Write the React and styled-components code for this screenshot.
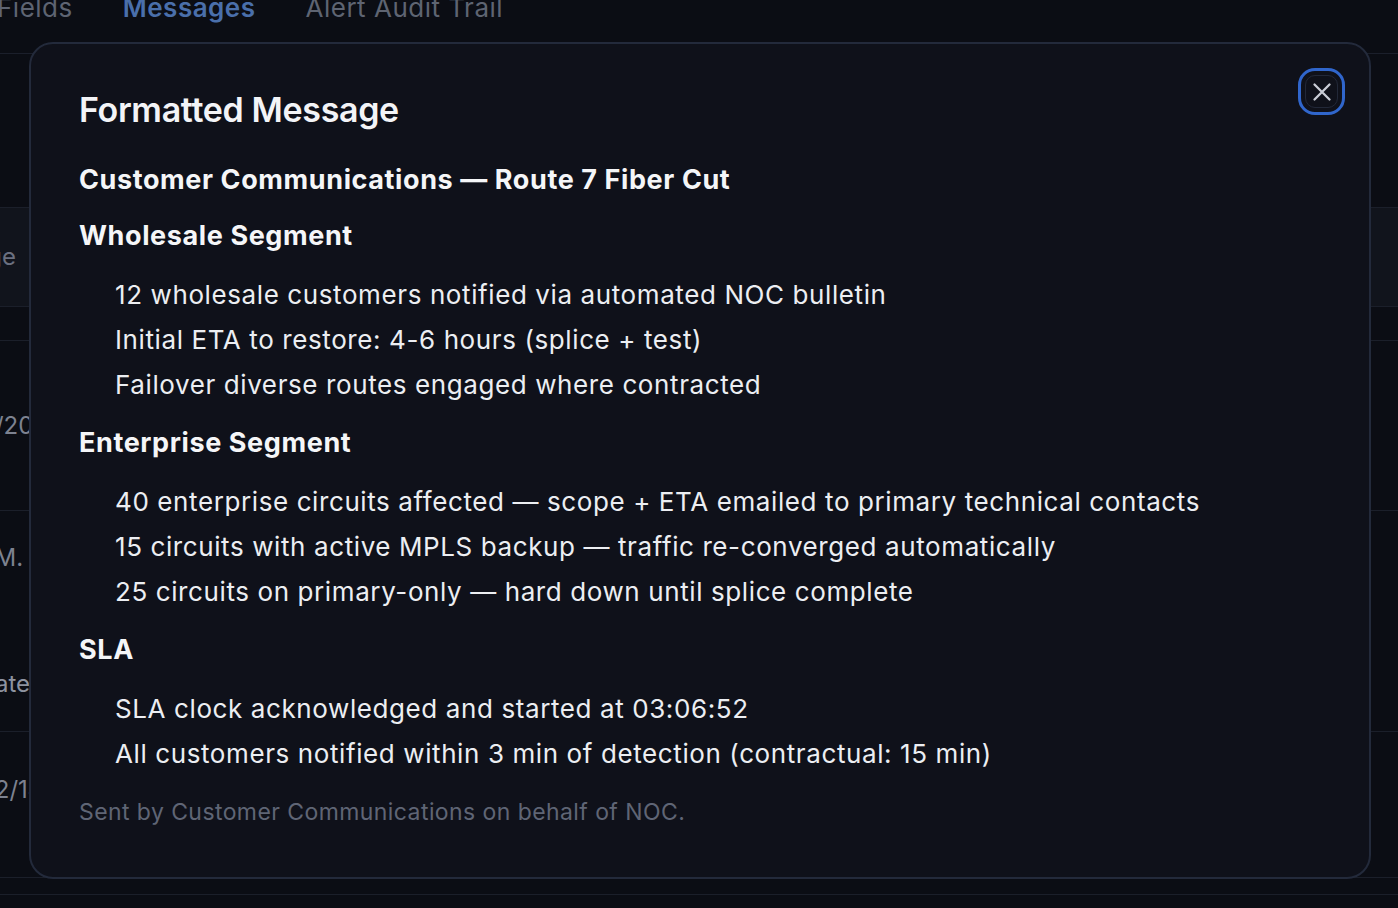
import React from 'react';
import styled, { createGlobalStyle } from 'styled-components';

const GlobalStyle = createGlobalStyle`
	* {
		box-sizing: border-box;
	}
	body {
		margin: 0;
		background: #0b0d14;
		font-family: Inter, 'Noto Sans', sans-serif;
		-webkit-font-smoothing: antialiased;
	}
`;

const Page = styled.div`
	position: relative;
	width: 100vw;
	height: 100vh;
	overflow: hidden;
	background: #0b0d14;
`;

const TabBar = styled.div`
	display: flex;
	align-items: flex-start;
	gap: 50px;
	height: 62px;
	margin-top: -8px;
	margin-left: -3px;
	border-bottom: 1px solid #1b1f2b;
`;

const Tab = styled.div`
	font-size: 26px;
	line-height: 32px;
	letter-spacing: 0.5px;
	font-weight: ${p => (p.$active ? 600 : 400)};
	color: ${p => (p.$active ? '#4a6fab' : '#5e6472')};
	white-space: nowrap;
`;

const Row = styled.div`
	display: flex;
	flex-direction: column;
	justify-content: ${p => (p.$centered ? 'center' : 'flex-start')};
	height: ${p => p.$height}px;
	padding-top: ${p => p.$pad || 0}px;
	background: ${p => (p.$highlight ? '#11141c' : 'transparent')};
	border-bottom: 1px solid #1b1f2a;
	overflow: hidden;
`;

const Cell = styled.div`
	font-size: 24px;
	line-height: 32px;
	color: ${p => p.$color || '#7d8290'};
	white-space: nowrap;
	margin-left: ${p => p.$shift || 0}px;
	margin-top: ${p => p.$gap || 0}px;
`;

const EndCell = styled.div`
	display: flex;
	justify-content: flex-end;
	width: ${p => p.$width}px;
	overflow: hidden;
	font-size: 24px;
	line-height: 32px;
	color: ${p => p.$color || '#7d8290'};
	white-space: nowrap;
	margin-top: ${p => p.$gap || 0}px;
`;

const Modal = styled.div`
	position: absolute;
	left: 29px;
	top: 42px;
	right: 27px;
	bottom: 29px;
	background: #0f111a;
	border: 2px solid #232a3b;
	border-radius: 24px;
	padding: 45px 50px 0 48px;
`;

const CloseButton = styled.button`
	position: absolute;
	top: 31px;
	right: 31px;
	width: 33px;
	height: 33px;
	display: flex;
	align-items: center;
	justify-content: center;
	padding: 0;
	background: transparent;
	border: 1px solid #222838;
	border-radius: 10px;
	outline: 3px solid #3066cc;
	outline-offset: 4px;
	cursor: pointer;
`;

const Title = styled.h2`
	margin: 0;
	font-size: 34px;
	line-height: 42px;
	font-weight: 600;
	letter-spacing: -0.35px;
	color: #f3f4f7;
`;

const Body = styled.div`
	display: flex;
	flex-direction: column;
	gap: 20px;
	margin-top: 33px;
`;

const Heading = styled.h3`
	margin: 0;
	font-size: 27px;
	line-height: 32px;
	font-weight: 700;
	letter-spacing: 0.6px;
	color: #f5f6f8;
	margin-bottom: ${p => (p.$lead ? 4 : 0)}px;
`;

const List = styled.ul`
	margin: 0;
	padding: 0 0 0 36px;
	list-style: none;
`;

const Item = styled.li`
	font-size: 26px;
	line-height: 45px;
	color: #eceef2;
	letter-spacing: 0.6px;
`;

const Footer = styled.p`
	margin: 2px 0 0;
	font-size: 23px;
	line-height: 28px;
	color: #5f6575;
	letter-spacing: 0.42px;
`;

const sections = [
	{
		title: 'Wholesale Segment',
		items: [
			'12 wholesale customers notified via automated NOC bulletin',
			'Initial ETA to restore: 4-6 hours (splice + test)',
			'Failover diverse routes engaged where contracted',
		],
	},
	{
		title: 'Enterprise Segment',
		items: [
			'40 enterprise circuits affected — scope + ETA emailed to primary technical contacts',
			'15 circuits with active MPLS backup — traffic re-converged automatically',
			'25 circuits on primary-only — hard down until splice complete',
		],
	},
	{
		title: 'SLA',
		items: [
			'SLA clock acknowledged and started at 03:06:52',
			'All customers notified within 3 min of detection (contractual: 15 min)',
		],
	},
];

const XIcon = () => (
	<svg width="20" height="20" viewBox="0 0 20 20" fill="none">
		<path
			d="M2.5 2.5 L17.5 17.5 M17.5 2.5 L2.5 17.5"
			stroke="#c9cdd6"
			strokeWidth="2.3"
			strokeLinecap="round"
		/>
	</svg>
);

const App = () => {
	return (
		<>
			<GlobalStyle />
			<Page>
				<TabBar>
					<Tab>Fields</Tab>
					<Tab $active>Messages</Tab>
					<Tab>Alert Audit Trail</Tab>
				</TabBar>
				<Row $height={154} />
				<Row $height={99} $highlight $centered>
					<EndCell $width={16} $color="#6b7080">Message</EndCell>
				</Row>
				<Row $height={34} />
				<Row $height={170} $centered>
					<Cell $shift={-30}>10/20/2024 03:06</Cell>
				</Row>
				<Row $height={221} $pad={31}>
					<Cell $shift={-22}>AM. ...</Cell>
					<EndCell $width={30} $gap={94} $color="#8e93a0">Escalate</EndCell>
				</Row>
				<Row $height={146} $pad={42}>
					<Cell $shift={-15}>12/14/2024 03:09</Cell>
				</Row>
				<Row $height={17} />

				<Modal>
					<CloseButton aria-label="Close">
						<XIcon />
					</CloseButton>
					<Title>Formatted Message</Title>
					<Body>
						<Heading $lead>Customer Communications — Route 7 Fiber Cut</Heading>
						{sections.map(section => (
							<React.Fragment key={section.title}>
								<Heading>{section.title}</Heading>
								<List>
									{section.items.map(item => (
										<Item key={item}>{item}</Item>
									))}
								</List>
							</React.Fragment>
						))}
						<Footer>Sent by Customer Communications on behalf of NOC.</Footer>
					</Body>
				</Modal>
			</Page>
		</>
	);
};

export default App;
